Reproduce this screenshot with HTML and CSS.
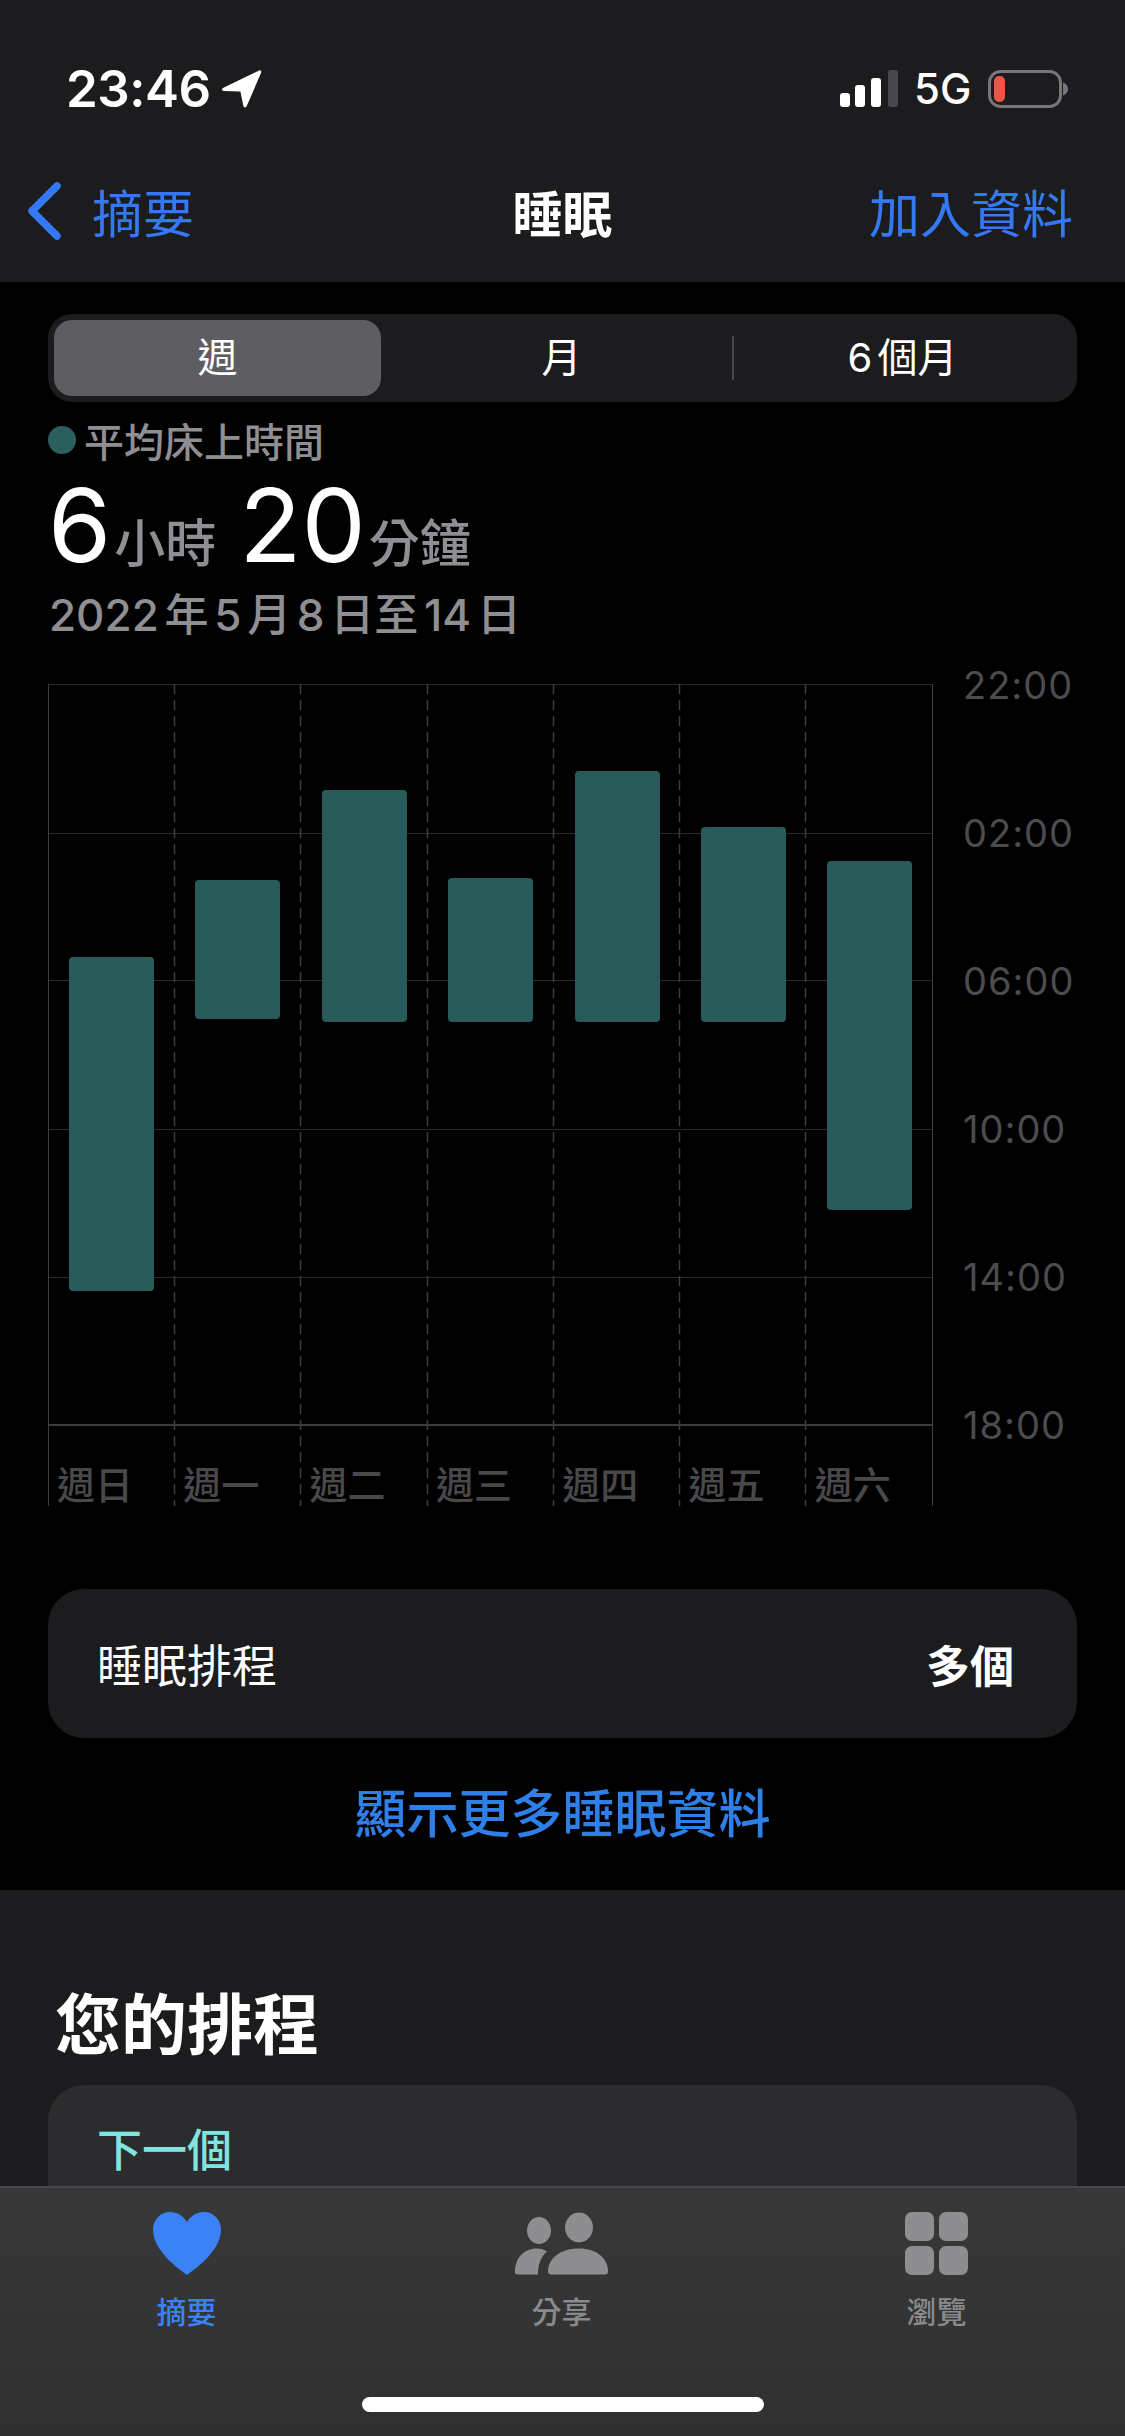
FILE: index.html
```html
<!doctype html>
<html lang="zh-Hant">
<head>
<title>睡眠</title>
<meta charset="utf-8">
<meta name="viewport" content="width=device-width, initial-scale=1">
<link rel="stylesheet" href="styles.css">
</head>
<body>

<div id="screen">

	<div class="topbar">
		<div class="status">
			<div class="statusLeft">
				<span class="clock">23:46</span>
				<svg class="locArrow" viewBox="0 0 40 38"><path d="M37 0.5C38.5 0 39.6 1 39.2 2.6L25 35.5C24 38 21.6 38 21.3 35.5L18.4 21.6L2 21C-0.4 20.8 -0.6 18.8 1.4 17.8Z"/></svg>
			</div>
			<div class="statusRight">
				<svg class="signal" viewBox="0 0 58 37">
					<rect x="0" y="23" width="10" height="14" rx="3" fill="#fff"/>
					<rect x="15" y="15" width="10" height="22" rx="3" fill="#fff"/>
					<rect x="31" y="8" width="10" height="29" rx="3" fill="#fff"/>
					<rect x="48" y="0" width="10" height="37" rx="3" fill="#48484a"/>
				</svg>
				<span class="net">5G</span>
				<svg class="battery" viewBox="0 0 80 38">
					<rect x="1.5" y="1.5" width="71" height="35" rx="11" fill="none" stroke="#77777a" stroke-width="3"/>
					<rect x="6" y="6" width="11" height="26" rx="5" fill="#eb5545"/>
					<path d="M75 12.5C78 13.5 80 16 80 19C80 22 78 24.500 75 25.500Z" fill="#77777a"/>
				</svg>
			</div>
		</div>
		<div class="nav">
			<a class="back">
				<svg class="chevron" viewBox="0 0 36 58"><path d="M31 4L6 29L31 54" fill="none" stroke="#3478f6" stroke-width="7.500" stroke-linecap="round" stroke-linejoin="round"/></svg>
				摘要
			</a>
			<h1 class="navTitle">睡眠</h1>
			<a class="navAction">加入資料</a>
		</div>
	</div>

	<div class="scroller">

		<div class="sleep">
			<div class="segments">
				<div class="seg active">週</div>
				<div class="seg">月</div>
				<div class="segDivider"></div>
				<div class="seg">6 個月</div>
			</div>

			<div class="legend"><span class="dot"></span>平均床上時間</div>
			<div class="total">
				<span class="num">6</span><span class="unit">小時</span>
				<span class="num num2">20</span><span class="unit">分鐘</span>
			</div>
			<div class="range">2022 年 5 月 8 日至 14 日</div>

			<div class="chart">
				<div class="plot">
					<svg class="grid" width="885" height="822" viewBox="0 0 885 822">
						<path d="M0 0.500H885M0 149.500H885M0 296.500H885M0 445.500H885M0 593.500H885" stroke="#2a2a2c" stroke-width="1"/>
						<path d="M0 741H885" stroke="#3d3d3f" stroke-width="2"/>
						<path d="M0.500 0V822M884.500 0V822" stroke="#3d3d3f" stroke-width="1"/>
						<path d="M126.500 0V822M252.500 0V822M379.500 0V822M505.500 0V822M631.500 0V822M757.500 0V822" stroke="#3d3d3f" stroke-width="1.500" stroke-dasharray="10 6"/>
					</svg>
					<div class="bar" style="left:21px;top:273px;height:334px"></div>
					<div class="bar" style="left:147px;top:196px;height:139px"></div>
					<div class="bar" style="left:274px;top:106px;height:232px"></div>
					<div class="bar" style="left:400px;top:194px;height:144px"></div>
					<div class="bar" style="left:527px;top:87px;height:251px"></div>
					<div class="bar" style="left:653px;top:143px;height:195px"></div>
					<div class="bar" style="left:779px;top:177px;height:349px"></div>
					<div class="days">
						<span>週日</span><span>週一</span><span>週二</span><span>週三</span><span>週四</span><span>週五</span><span>週六</span>
					</div>
				</div>
				<div class="yaxis">
					<span>22:00</span><span>02:00</span><span>06:00</span><span>10:00</span><span>14:00</span><span>18:00</span>
				</div>
			</div>

			<div class="rowCard">
				<span>睡眠排程</span>
				<b>多個</b>
			</div>
			<a class="more">顯示更多睡眠資料</a>
		</div>

		<div class="schedule">
			<h2>您的排程</h2>
			<div class="schedCard">
				<div class="nextLabel">下一個</div>
			</div>
		</div>

	</div>

	<div class="tabbar">
		<div class="tabs">
			<div class="tab current">
				<svg class="tabIcon" width="68" height="63" viewBox="0 0 68 63"><path d="M34 63C30 60 0 40 0 18C0 7 8 0 17 0C24 0 30 3.500 34 10C38 3.500 44 0 51 0C60 0 68 7 68 18C68 40 38 60 34 63Z" fill="#3b82f6"/></svg>
				<span>摘要</span>
			</div>
			<div class="tab">
				<svg class="tabIcon" width="93" height="62" viewBox="0 0 93 62">
					<g fill="#8e8e90">
						<ellipse cx="24" cy="18" rx="12" ry="13.500"/>
						<path d="M0 60C0 45 9 36 22 36C26 36 29 37 32 39C26 44 23 52 23 60C23 61 23 62 23 62H3C1 62 0 61 0 60Z"/>
						<ellipse cx="64" cy="15" rx="14" ry="15"/>
						<path d="M36 62C34 62 33 61 33 59C33 46 45 36 64 36C82 36 93 46 93 59C93 61 92 62 90 62Z"/>
					</g>
				</svg>
				<span>分享</span>
			</div>
			<div class="tab">
				<div class="tabIcon tiles">
					<i></i><i></i><i></i><i></i>
				</div>
				<span>瀏覽</span>
			</div>
		</div>
		<div class="homeBar"></div>
	</div>

</div>

</body>
</html>
```

FILE: styles.css
```css
* { margin: 0; padding: 0; box-sizing: border-box; }
html, body { height: 100%; background: #000; }

body {
	font-family: Inter, "Noto Sans CJK TC", sans-serif;
	color: #fff;
}

#screen {
	width: 1125px; height: 2436px;
	display: flex; flex-direction: column;
	overflow: hidden;
	background: #000;
}

/* status + nav */
.topbar {
	height: 282px;
	background: #1c1c1e;
	flex: none;
}
.status {
	display: flex;
	justify-content: space-between;
	padding-top: 70px;
	height: 108px;
}
.statusLeft, .statusRight { display: flex; align-items: flex-start; }
.statusLeft { padding-left: 66px; }
.statusRight { padding-right: 57px; }
.clock {
	font-size: 51px; line-height: 38px;
	font-weight: 600;
	letter-spacing: -0.5px;
}
.locArrow { width: 40px; height: 38px; fill: #fff; margin-left: 11px; }
.signal { width: 58px; height: 37px; }
.net {
	font-size: 42px; line-height: 37px;
	font-weight: 500;
	margin-left: 16px;
	width: 74px;
}
.battery { width: 80px; height: 38px; }

.nav {
	display: flex; align-items: center;
	justify-content: space-between;
	height: 98px;
	margin-top: 54px;
	padding: 0 52px 0 26px;
	position: relative;
}
.back, .navAction { font-size: 51px; color: #3478f6; }
.back { display: flex; align-items: center; gap: 30px; }
.chevron { width: 36px; height: 58px; }
.navTitle {
	font-size: 50px; font-weight: 700;
	position: absolute; left: 0; right: 0;
	text-align: center;
}

.scroller { flex: 1; overflow: hidden; }

/* sleep summary */
.sleep { padding: 32px 48px 0; height: 1608px; }

.segments {
	height: 88px;
	display: flex; align-items: center;
	padding: 6px;
	background: #1c1c1e;
	border-radius: 24px;
}
.seg {
	height: 76px; line-height: 76px;
	width: 327px;
	text-align: center;
	font-size: 40px;
	word-spacing: -6px;
}
.seg.active { background: #5e5e62; border-radius: 18px; }
.seg:nth-child(2) { width: 341px; margin-left: 10px; }
.seg:nth-child(4) { flex: 1; }
.segDivider { width: 2px; height: 44px; background: #48484a; }

.legend {
	display: flex; align-items: center;
	margin-top: 16px;
	height: 44px;
	font-size: 40px; color: #8e8e93;
	font-weight: 500;
}
.dot {
	width: 28px; height: 28px;
	border-radius: 50%;
	background: #2a5f5e;
	margin-right: 8px;
}
.total {
	display: flex; align-items: baseline;
	margin-top: 15px;
	height: 96px; line-height: 96px;
}
.num { font-size: 102px; font-weight: 400; }
.num2 { margin-left: 23px; }
.unit {
	font-size: 51px; font-weight: 500;
	color: #8e8e93;
	margin-left: 3px;
}
.range {
	margin-top: 12px;
	height: 60px; line-height: 60px;
	font-size: 44px; font-weight: 500;
	color: #8e8e93;
	word-spacing: -6px;
	padding-left: 1px;
}

/* chart */
.chart {
	display: flex;
	margin-top: -34px;
}
.plot {
	position: relative;
	width: 885px; height: 822px;
	margin-top: 73px;
	flex: none;
}
.grid { position: absolute; top: 0; left: 0; }
.bar {
	position: absolute;
	width: 85px;
	background: #285a5a;
	border-radius: 4px;
}
.days {
	position: absolute;
	left: 0; right: 0; top: 776px;
	display: grid;
	grid-template-columns: repeat(7, 126.3px);
	font-size: 38px; line-height: 50px;
	color: #48484a;
	font-weight: 500;
}
.days span { padding-left: 9px; }
.yaxis {
	display: flex; flex-direction: column;
	margin-left: 30px;
}
.yaxis span {
	height: 148px; line-height: 148px;
	font-size: 38px;
	letter-spacing: 1px;
	color: #4c4c4e;
}

.rowCard {
	margin-top: 83px;
	height: 149px;
	display: flex; align-items: center;
	justify-content: space-between;
	padding: 0 63px 0 49px;
	background: #1c1c1e;
	border-radius: 36px;
	font-size: 45px;
}
.rowCard b { font-size: 44px; font-weight: 700; }

.more {
	display: block;
	margin-top: 42px;
	text-align: center;
	font-size: 52px; line-height: 70px;
	font-weight: 500;
	color: #2f7fe8;
}

/* schedule */
.schedule {
	height: 296px;
	background: #1c1c1e;
	padding: 90px 48px 0;
	overflow: hidden;
}
.schedule h2 {
	font-size: 66px; line-height: 90px;
	font-weight: 700;
	padding-left: 7px;
}
.schedCard {
	margin-top: 15px;
	height: 200px;
	background: #2c2c2e;
	border-radius: 36px;
	padding: 36px 49px 0;
}
.nextLabel {
	font-size: 45px; line-height: 60px;
	font-weight: 500;
	color: #80e5e0;
}

/* tab bar */
.tabbar {
	height: 250px;
	flex: none;
	background: linear-gradient(#373839, #303031);
	border-top: 2px solid #48484a;
}
.tabs {
	display: grid;
	grid-template-columns: repeat(3, 1fr);
	padding-top: 24px;
	margin-left: -1px;
	width: 1125px;
	height: 209px;
}
.tab {
	display: flex; flex-direction: column; align-items: center;
	font-size: 30px; line-height: 36px;
	color: #8a8a8c;
	font-weight: 500;
}
.tab.current { color: #3b82f6; }
.tabIcon { height: 63px; margin-bottom: 19px; display: block; }
.tiles {
	width: 63px;
	display: grid;
	grid-template-columns: 1fr 1fr;
	gap: 5px;
}
.tiles i { background: #8e8e90; border-radius: 7px; }

.homeBar {
	width: 402px; height: 15px;
	margin: 0 auto;
	background: #fff;
	border-radius: 8px;
}
```
